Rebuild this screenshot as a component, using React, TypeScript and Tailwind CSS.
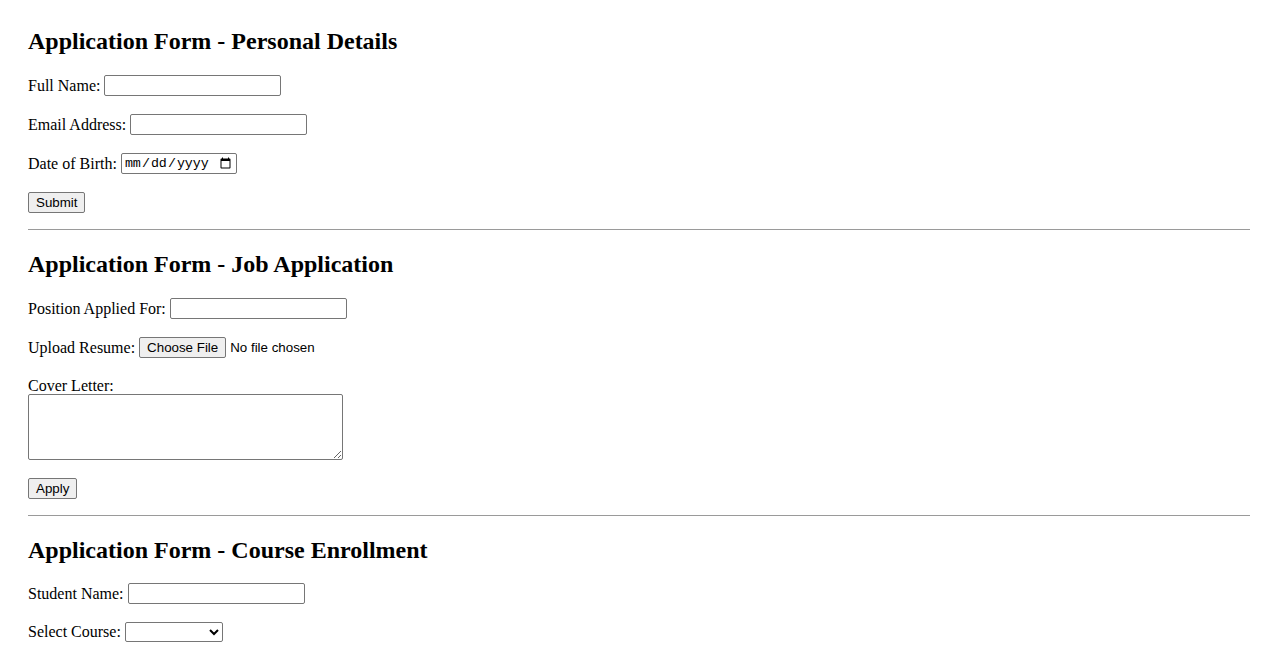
const field =
  "h-[21px] w-[177px] rounded-[2px] border border-[#767676] bg-white px-[2px] py-[1px] font-['Liberation_Sans',Arial,sans-serif] text-[13.333px] text-black";
const btn =
  "h-[21px] rounded-[2px] border border-[#767676] bg-[#efefef] px-[7px] font-['Liberation_Sans',Arial,sans-serif] text-[13.333px] leading-none text-black";

function Row({ label, children, className = "" }: { label: string; children: React.ReactNode; className?: string }) {
  return (
    <div className={`flex h-[21px] items-center gap-[4px] ${className}`}>
      <label>{label}</label>
      {children}
    </div>
  );
}

function Heading({ children, className = "" }: { children: React.ReactNode; className?: string }) {
  return (
    <h2 className={`flex h-[28px] items-center text-[24px] font-bold leading-[28px] ${className}`}>{children}</h2>
  );
}

export default function App() {
  return (
    <div className="min-h-screen bg-white px-[28px] pt-[27px] pb-[20px] font-['Liberation_Serif','Times_New_Roman',serif] text-[16px] text-black">
      {/* Personal details */}
      <Heading>Application Form - Personal Details</Heading>
      <Row label="Full Name:" className="mt-[20px]">
        <input type="text" className={field} />
      </Row>
      <Row label="Email Address:" className="mt-[18px]">
        <input type="email" className={field} />
      </Row>
      <Row label="Date of Birth:" className="mt-[18px]">
        <input
          type="date"
          className="h-[21px] w-[116px] rounded-[2px] border border-[#767676] bg-white px-[2px] py-[1px] font-['Liberation_Mono','Courier_New',monospace] text-[13.333px] text-black"
        />
      </Row>
      <div className="mt-[18px] flex h-[21px] items-center">
        <button className={btn}>Submit</button>
      </div>

      <hr className="mt-[16px] border-0 border-t border-[#9a9a9a]" />

      {/* Job application */}
      <Heading className="mt-[20px]">Application Form - Job Application</Heading>
      <Row label="Position Applied For:" className="mt-[20px]">
        <input type="text" className={field} />
      </Row>
      <Row label="Upload Resume:" className="mt-[18px]">
        <input
          type="file"
          className="h-[21px] font-['Liberation_Sans',Arial,sans-serif] text-[13.333px] text-black file:mr-[4px] file:h-[21px] file:rounded-[2px] file:border file:border-[#767676] file:bg-[#efefef] file:px-[7px] file:text-black"
        />
      </Row>
      <div className="mt-[19px] h-[17px] leading-[18px]">
        <label>Cover Letter:</label>
      </div>
      <textarea className="block h-[66px] w-[315px] rounded-[2px] border border-[#767676] bg-white p-[2px] font-['Liberation_Mono','Courier_New',monospace] text-[13.333px]" />
      <div className="mt-[18px] flex h-[21px] items-center">
        <button className={btn}>Apply</button>
      </div>

      <hr className="mt-[16px] border-0 border-t border-[#9a9a9a]" />

      {/* Course enrollment */}
      <Heading className="mt-[20px]">Application Form - Course Enrollment</Heading>
      <Row label="Student Name:" className="mt-[19px]">
        <input type="text" className={field} />
      </Row>
      <Row label="Select Course:" className="mt-[17px]">
        <select className="h-[20px] w-[98px] rounded-[2px] border border-[#767676] bg-white font-['Liberation_Sans',Arial,sans-serif] text-[13.333px] text-black">
          <option value=""></option>
          <option>Computer Science</option>
          <option>Mathematics</option>
          <option>Physics</option>
        </select>
      </Row>
    </div>
  );
}
